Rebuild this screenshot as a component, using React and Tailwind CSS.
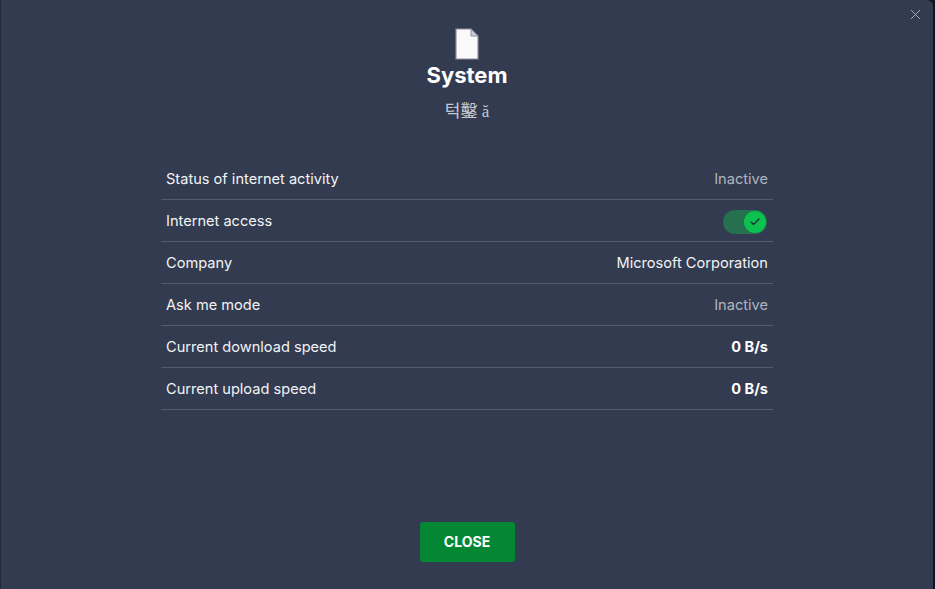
import { Check } from 'lucide-react'

const rows = [
  { label: 'Status of internet activity', value: 'Inactive', tone: 'muted' },
  { label: 'Internet access', toggle: true },
  { label: 'Company', value: 'Microsoft Corporation', tone: 'normal' },
  { label: 'Ask me mode', value: 'Inactive', tone: 'muted' },
  { label: 'Current download speed', value: '0 B/s', tone: 'bold' },
  { label: 'Current upload speed', value: '0 B/s', tone: 'bold' },
]

function Toggle() {
  return (
    <div className="mr-[1px] flex h-6 w-11 items-center justify-end rounded-full bg-[#25704f] pr-[1px]">
      <div className="flex h-[22px] w-[22px] items-center justify-center rounded-full bg-[#0cc24f]">
        <Check size={12} strokeWidth={2.5} className="text-[#1f2a3c]" />
      </div>
    </div>
  )
}

export default function App() {
  return (
    <div className="h-[589px] w-[935px] overflow-hidden bg-[#10141f]">
      <div className="flex h-full w-[933px] flex-col items-center rounded-tr-[6px] border-l border-[#232b3b] bg-[#333b50] font-['Inter',sans-serif] text-[#f2f3f5]">
        <div className="flex w-full justify-end pt-[9px] pr-[12px]">
          <svg width="11" height="11" viewBox="0 0 11 11" fill="none" stroke="#a4abb8" strokeWidth="1">
            <path d="M1 1l9 9M10 1l-9 9" />
          </svg>
        </div>

        <svg width="24" height="32" viewBox="0 0 24 32" className="mt-[8px]">
          <path d="M1 1h15l7 7v23H1z" fill="#fafafa" stroke="#8b909c" strokeWidth="1.2" />
          <path d="M16 1v7h7z" fill="#c9ccd2" stroke="#8b909c" strokeWidth="1" />
        </svg>

        <h1 className="mt-[1px] text-[22px] leading-[28px] font-bold text-white">System</h1>
        <p className="mt-[11px] font-['Liberation_Serif','Noto_Sans_CJK_KR',serif] text-[17px] leading-[24px] text-[#c5c9d1]">턱鑿 ă</p>

        <div className="mt-[34px] w-[612px]">
          {rows.map(row => (
            <div key={row.label} className="flex h-[42px] items-center justify-between border-b border-[#545c6e] px-[5px] pt-[2px] text-[14.6px]">
              <span>{row.label}</span>
              {row.toggle && <Toggle />}
              {row.tone === 'muted' && <span className="text-[#b0b4bd]">{row.value}</span>}
              {row.tone === 'normal' && <span>{row.value}</span>}
              {row.tone === 'bold' && <span className="font-bold text-white">{row.value}</span>}
            </div>
          ))}
        </div>

        <button className="mt-[112px] h-10 w-[95px] rounded-[3px] bg-[#038732] pb-[2px] text-[14px] font-bold text-white">CLOSE</button>
      </div>
    </div>
  )
}
